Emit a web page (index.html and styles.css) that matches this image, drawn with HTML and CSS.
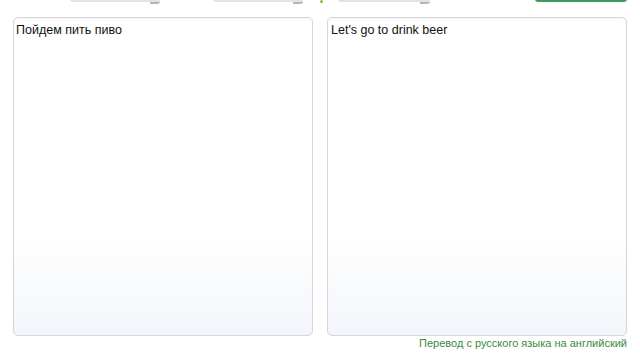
FILE: index.html
```html
<!DOCTYPE html>
<html lang="ru">
<head>
<meta charset="utf-8">
<link rel="stylesheet" href="styles.css">
</head>
<body>
<div class="toolbar">
  <div class="select sel1"><span class="arrow"></span></div>
  <div class="select sel2"><span class="arrow"></span></div>
  <div class="swap"></div>
  <div class="select sel3"><span class="arrow"></span></div>
  <div class="btn"></div>
</div>
<div class="panels">
  <div class="panel">Пойдем пить пиво</div>
  <div class="panel">Let's go to drink beer</div>
</div>
<div class="footer">Перевод с русского языка на английский</div>
</body>
</html>
```
FILE: styles.css
```css
html, body {
  margin: 0;
  padding: 0;
  background: #ffffff;
  width: 640px;
  height: 360px;
  overflow: hidden;
  font-family: "Liberation Sans", Arial, sans-serif;
}
.toolbar {
  display: flex;
  align-items: flex-end;
  height: 20px;
  margin-top: -18px;
  padding-left: 70px;
}
.select {
  display: flex;
  justify-content: flex-end;
  height: 20px;
  box-sizing: border-box;
  border-bottom: 2px solid #e2e2e2;
  border-radius: 0 0 3px 3px;
  background: #fafafa;
}
.select .arrow {
  width: 10px;
  height: 20px;
  margin-bottom: -2px;
  border-bottom: 2px solid #b5b5b5;
  border-radius: 0 0 3px 0;
}
.sel1 { width: 90px; }
.sel2 { width: 90px; margin-left: 53px; }
.swap {
  width: 3px;
  height: 3px;
  margin-left: 17px;
  margin-bottom: -1px;
  background: #7cc04a;
  border-radius: 2px;
}
.sel3 { width: 92px; margin-left: 15px; }
.btn {
  width: 92px;
  height: 20px;
  margin-left: 105px;
  box-sizing: border-box;
  background: #6bbf84;
  border-bottom: 2px solid #3f9a5e;
  border-radius: 0 0 3px 3px;
}
.panels {
  display: flex;
  gap: 14px;
  padding-left: 13px;
  margin-top: 15px;
}
.panel {
  width: 300px;
  height: 319px;
  box-sizing: border-box;
  border: 1px solid #d6d6d6;
  border-radius: 5px;
  padding: 5px 3px 4px 2px;
  font-size: 12.5px;
  line-height: 15px;
  color: #111111;
  background: linear-gradient(to bottom, #ffffff 0%, #ffffff 70%, #f3f5fb 100%);
  box-shadow: inset 0 1px 1px rgba(0,0,0,0.04);
}
.panel + .panel {
  padding-left: 3px;
}
.footer {
  width: 627px;
  text-align: right;
  font-size: 11px;
  line-height: 13px;
  margin-top: 1px;
  color: #3b8a3b;
}
```
